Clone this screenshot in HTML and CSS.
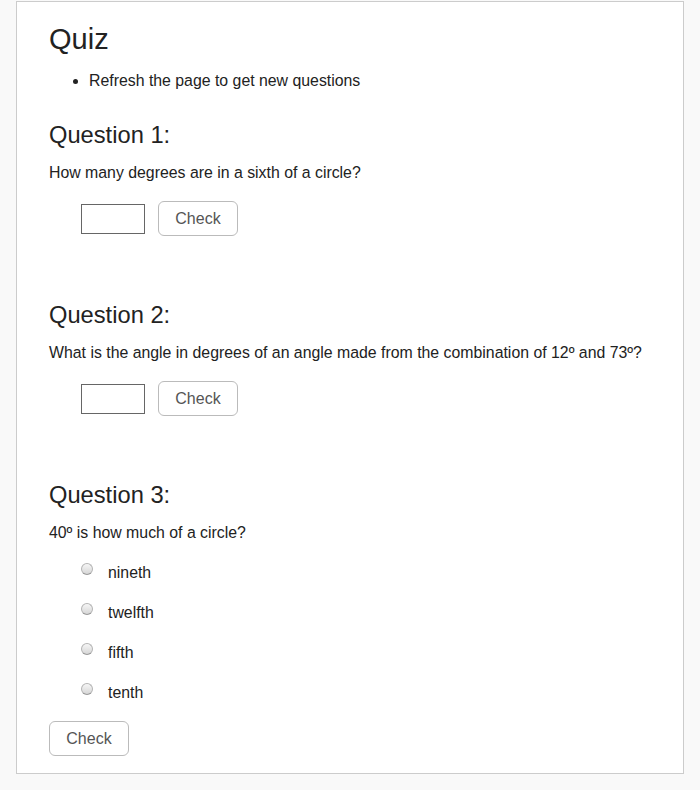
FILE: index.html
```html
<!DOCTYPE html>
<html>
<head>
<meta charset="utf-8">
<link rel="stylesheet" href="styles.css">
</head>
<body>
<div class="card">
  <h1 class="title">Quiz</h1>
  <ul class="notes">
    <li>Refresh the page to get new questions</li>
  </ul>

  <div class="question">
    <h2 class="qhead">Question 1:</h2>
    <p class="qtext">How many degrees are in a sixth of a circle?</p>
    <div class="answer-row">
      <input class="answer" type="text">
      <button class="check">Check</button>
    </div>
  </div>

  <div class="question">
    <h2 class="qhead">Question 2:</h2>
    <p class="qtext">What is the angle in degrees of an angle made from the combination of 12º and 73º?</p>
    <div class="answer-row">
      <input class="answer" type="text">
      <button class="check">Check</button>
    </div>
  </div>

  <div class="question last">
    <h2 class="qhead">Question 3:</h2>
    <p class="qtext">40º is how much of a circle?</p>
    <div class="choices">
      <label class="choice"><input class="radio" type="radio" name="q3"><span>nineth</span></label>
      <label class="choice"><input class="radio" type="radio" name="q3"><span>twelfth</span></label>
      <label class="choice"><input class="radio" type="radio" name="q3"><span>fifth</span></label>
      <label class="choice"><input class="radio" type="radio" name="q3"><span>tenth</span></label>
    </div>
    <button class="check">Check</button>
  </div>
</div>
</body>
</html>
```

FILE: styles.css
```css
html, body {
  margin: 0;
  padding: 0;
}
body {
  background: #f9f9f9;
  font-family: "Liberation Sans", Arial, sans-serif;
  color: #222;
}
.card {
  margin: 1px 16px 16px;
  border: 1px solid #ccc;
  background: #fff;
  padding: 20px 32px 17px;
}
.title {
  margin: 0 0 16px;
  font-size: 29px;
  line-height: 34px;
  font-weight: normal;
}
.notes {
  margin: 0;
  padding-left: 40px;
  font-size: 15.85px;
  line-height: 18px;
}
.question {
  padding-top: 31px;
  padding-bottom: 34px;
}
.question.last {
  padding-bottom: 0;
}
.qhead {
  margin: 0 0 15px;
  font-size: 23.7px;
  line-height: 28px;
  font-weight: normal;
}
.qtext {
  margin: 0 0 19px;
  font-size: 15.85px;
  line-height: 18px;
}
.last .qtext {
  margin-bottom: 11px;
}
.answer-row {
  display: flex;
  align-items: center;
  padding-left: 32px;
  gap: 13px;
}
.answer {
  box-sizing: border-box;
  width: 64px;
  height: 30px;
  margin: 0;
  border: 1px solid #666;
  border-radius: 0;
  padding: 2px 4px;
  font-family: inherit;
  font-size: 16px;
}
.check {
  box-sizing: border-box;
  height: 35px;
  width: 80px;
  margin: 0;
  padding: 0;
  border: 1px solid #bbb;
  border-radius: 6px;
  background: #fff;
  color: #555;
  font-family: "Liberation Sans", Arial, sans-serif;
  font-size: 16px;
}
.choices {
  display: flex;
  flex-direction: column;
  margin-bottom: 8px;
}
.choice {
  display: flex;
  align-items: center;
  height: 40px;
  padding-left: 32px;
  font-size: 15.85px;
  line-height: 18px;
}
.radio {
  appearance: none;
  -webkit-appearance: none;
  box-sizing: border-box;
  width: 12px;
  height: 12px;
  margin: 0 15px 8px 0;
  border: 1px solid #b4b4b4;
  border-bottom-color: #999;
  border-radius: 50%;
  background: linear-gradient(#f6f6f6, #d6d6d6);
}
```
